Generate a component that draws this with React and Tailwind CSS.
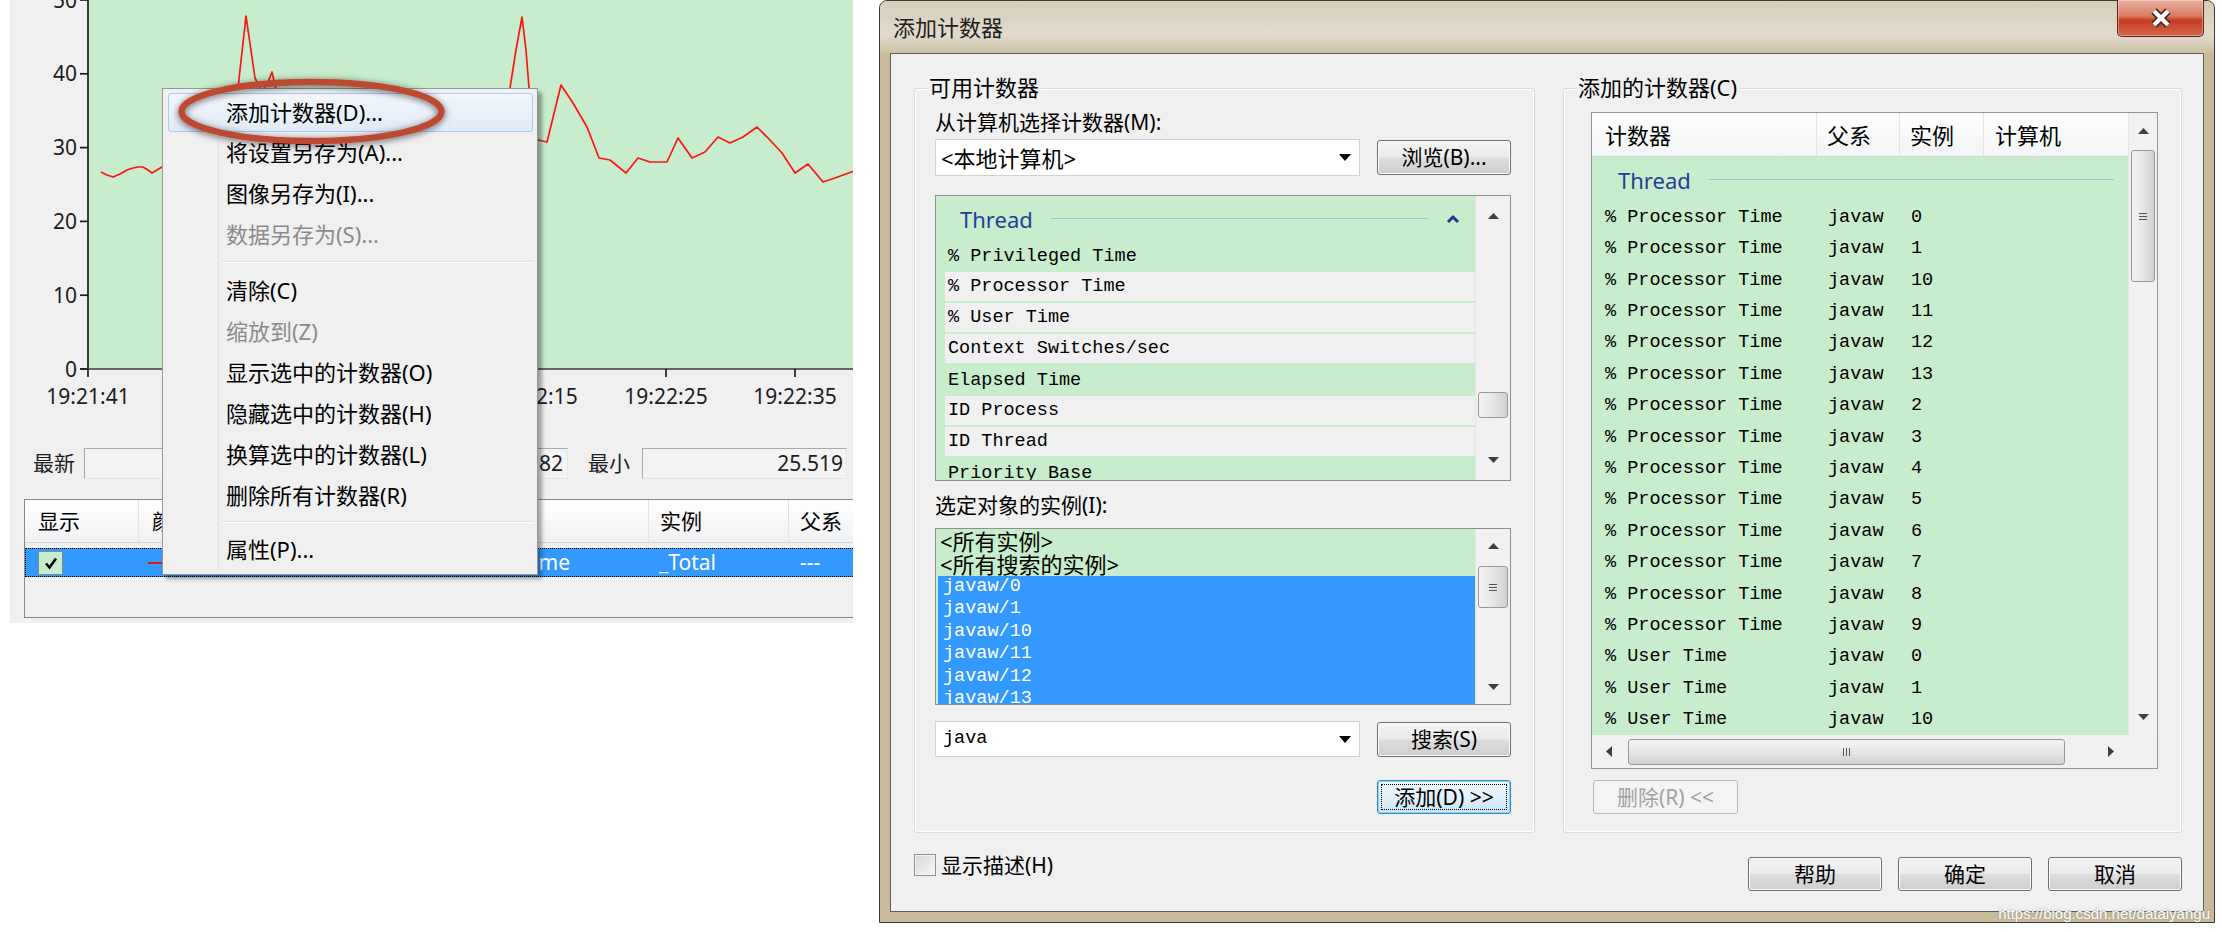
import React from 'react'

const LINE = [
  [101, 172], [107, 175], [113, 177], [120, 174], [127, 170], [133, 168], [138, 167], [143, 167],
  [148, 170], [152, 173], [157, 170], [162, 167], [175, 165], [190, 160], [205, 158], [220, 150],
  [232, 120], [238, 88], [246, 16], [255, 78], [262, 92], [268, 82], [272, 72], [276, 90],
  [285, 120], [300, 150], [320, 160], [340, 155], [360, 165], [380, 158], [400, 162], [420, 150],
  [440, 160], [460, 155], [480, 150], [500, 145], [506, 120], [510, 88], [516, 50], [522, 17],
  [526, 50], [529, 88], [533, 130], [538, 140], [547, 142], [561, 85], [573, 103], [587, 127],
  [599, 158], [610, 160], [626, 173], [638, 158], [650, 162], [667, 162], [678, 138], [692, 158],
  [705, 152], [718, 137], [730, 143], [743, 137], [757, 127], [770, 140], [782, 153], [795, 173],
  [808, 164], [823, 182], [835, 178], [854, 171],
]
  .map((p) => p.join(','))
  .join(' ')

const TIMES = [
  ['19:21:41', 88],
  ['19:22:15', 536],
  ['19:22:25', 666],
  ['19:22:35', 795],
]

const COUNTERS = [
  ['% Privileged Time', true],
  ['% Processor Time', false],
  ['% User Time', false],
  ['Context Switches/sec', false],
  ['Elapsed Time', true],
  ['ID Process', false],
  ['ID Thread', false],
  ['Priority Base', true],
]

const ADDED = [
  ...['0', '1', '10', '11', '12', '13', '2', '3', '4', '5', '6', '7', '8', '9'].map((n) => ['% Processor Time', n]),
  ...['0', '1', '10'].map((n) => ['% User Time', n]),
]

export default function App() {
  return (
    <div className="flex h-[932px] w-[2222px] items-start gap-[26px] overflow-hidden bg-white pl-[10px] font-['Noto_Sans','Noto_Sans_CJK_SC',sans-serif] text-black">
      <PerfPanel />
      <AddCounterDialog />
    </div>
  )
}

/* ---------- left: perfmon graph with context menu ---------- */

function PerfPanel() {
  return (
    <div className="relative flex h-[623px] w-[843px] shrink-0 flex-col overflow-hidden bg-[#f0f0f0]">
      <Chart />

      <div className="mt-[28px] flex h-[31px] items-center whitespace-nowrap text-[21px] leading-none text-[#1c1c1c]">
        <span className="ml-[23px] w-[51px]">最新</span>
        <div className="flex h-full w-[484px] items-center justify-end border border-b-[#e6e6e6] border-l-[#a9a9a9] border-r-[#e6e6e6] border-t-[#a9a9a9] bg-[#f3f3f3] pr-[4px]">
          82
        </div>
        <span className="ml-[20px] w-[54px]">最小</span>
        <div className="flex h-full w-[205px] items-center justify-end border border-b-[#e6e6e6] border-l-[#a9a9a9] border-r-[#e6e6e6] border-t-[#a9a9a9] bg-[#f3f3f3] pr-[3px]">
          25.519
        </div>
      </div>

      <div className="ml-[14px] mt-[20px] h-[119px] w-[840px] shrink-0 border border-[#828790] bg-[#f0f0f0] text-[21px]">
        <div className="flex h-[43px] items-center border-b border-[#d5d5d5] bg-gradient-to-b from-white to-[#f1f2f4] leading-none">
          <div className="flex h-full w-[114px] items-center border-r border-[#e2e3e5] pl-[13px]">显示</div>
          <div className="flex h-full w-[120px] items-center border-r border-[#e2e3e5] pl-[13px]">颜色</div>
          <div className="flex h-full w-[130px] items-center border-r border-[#e2e3e5] pl-[11px]">比例</div>
          <div className="flex h-full w-[260px] items-center border-r border-[#e2e3e5] pl-[11px]">计数器</div>
          <div className="flex h-full w-[140px] items-center border-r border-[#e2e3e5] pl-[11px]">实例</div>
          <div className="flex h-full flex-1 items-center pl-[11px]">父系</div>
        </div>
        <div className="mt-[5px] flex h-[29px] items-center border border-dotted border-black bg-[#3399ff] leading-none text-white">
          <div className="flex w-[113px] items-center pl-[12px]">
            <div className="flex h-[24px] w-[25px] items-center justify-center border border-[#7f8c83] bg-[#c7edcc]">
              <svg width="16" height="16" viewBox="0 0 16 16">
                <path d="M3 8.5 L6.5 12.5 L13 3.5" fill="none" stroke="#000" strokeWidth="2.6" />
              </svg>
            </div>
          </div>
          <div className="flex w-[120px] items-center pl-[9px]">
            <div className="h-[2px] w-[17px] bg-[#e0141e]" />
          </div>
          <div className="w-[130px]" />
          <div className="flex w-[260px] justify-end pr-[79px]">% Processor Time</div>
          <div className="w-[140px] pl-[10px]">_Total</div>
          <div className="pl-[11px]">---</div>
        </div>
      </div>

      <ContextMenu />

      <svg width="300" height="96" viewBox="0 0 300 96" className="absolute left-[160px] top-[64px]">
        <defs>
          <filter id="ovalShadow" x="-10%" y="-40%" width="120%" height="180%">
            <feDropShadow dx="0" dy="1.5" stdDeviation="3.5" floodColor="#000" floodOpacity="0.6" />
          </filter>
        </defs>
        <ellipse cx="141.5" cy="47.5" rx="130" ry="29.5" fill="none" stroke="#bc4a33" strokeWidth="6.5" filter="url(#ovalShadow)" />
      </svg>
    </div>
  )
}

function Chart() {
  const ticks = [0, 10, 20, 30, 40, 50]
  return (
    <svg width="843" height="420" viewBox="10 0 843 420" className="block shrink-0">
      <rect x="88" y="0" width="766" height="369" fill="#c7edcc" />
      <polyline points={LINE} fill="none" stroke="#ff1414" strokeWidth="1.7" strokeLinejoin="round" />
      <line x1="88" y1="0" x2="88" y2="377" stroke="#1c1c1c" strokeWidth="1.7" />
      <line x1="80" y1="369" x2="854" y2="369" stroke="#3a3a3a" strokeWidth="1.7" />
      {ticks.map((v, i) => {
        const y = 369 - i * 73.8
        return (
          <g key={v}>
            <line x1="80" x2="88" y1={y} y2={y} stroke="#1c1c1c" strokeWidth="1.7" />
            <text x="77" y={y + 7.5} textAnchor="end" fontSize="21" fill="#1c1c1c" fontFamily="Noto Sans">
              {v}
            </text>
          </g>
        )
      })}
      {[277, 407, 536, 666, 795].map((x) => (
        <line key={x} x1={x} x2={x} y1="369" y2="377" stroke="#1c1c1c" strokeWidth="1.7" />
      ))}
      {TIMES.map(([t, x]) => (
        <text key={t} x={x} y="404" textAnchor="middle" fontSize="21" fill="#1c1c1c" fontFamily="Noto Sans">
          {t}
        </text>
      ))}
    </svg>
  )
}

function ContextMenu() {
  return (
    <div className="absolute left-[152px] top-[88px] flex h-[487px] w-[376px] flex-col border border-[#979797] bg-[#f0f0f0] pb-[4px] pl-[5px] pr-[4px] pt-[4px] text-[22px] leading-none shadow-[4px_4px_4px_rgba(0,0,0,0.35)]">
      <div className="flex h-[39px] items-center rounded-[3px] border border-[#a9cdf4] bg-gradient-to-b from-[#f3f7fc] to-[#e0eaf6]">
        <div className="w-[50px]" />
        <span className="pl-[7px]">添加计数器(D)...</span>
      </div>
      <MenuItem>将设置另存为(A)...</MenuItem>
      <MenuItem>图像另存为(I)...</MenuItem>
      <MenuItem disabled>数据另存为(S)...</MenuItem>
      <MenuSeparator h="h-[15px]" />
      <MenuItem>清除(C)</MenuItem>
      <MenuItem disabled>缩放到(Z)</MenuItem>
      <MenuItem>显示选中的计数器(O)</MenuItem>
      <MenuItem>隐藏选中的计数器(H)</MenuItem>
      <MenuItem>换算选中的计数器(L)</MenuItem>
      <MenuItem>删除所有计数器(R)</MenuItem>
      <MenuSeparator h="h-[14px]" />
      <MenuItem>属性(P)...</MenuItem>
      <div className="flex flex-1">
        <div className="w-[51px] border-r border-[#e2e3e3]" />
      </div>
    </div>
  )
}

function MenuItem({ children, disabled }) {
  return (
    <div className="flex h-[41px] items-stretch">
      <div className="w-[51px] border-r border-[#e2e3e3]" />
      <span className={`flex items-center pl-[7px] ${disabled ? 'text-[#8b8b8b]' : 'text-black'}`}>{children}</span>
    </div>
  )
}

function MenuSeparator({ h }) {
  return (
    <div className={`flex ${h}`}>
      <div className="w-[51px] border-r border-[#e2e3e3]" />
      <div className="flex flex-1 flex-col justify-center pl-[2px]">
        <div className="h-[2px] border-t border-[#e0e0e0] bg-white" />
      </div>
    </div>
  )
}

/* ---------- right: the add counters dialog ---------- */

function AddCounterDialog() {
  return (
    <div className="relative flex h-[923px] w-[1336px] shrink-0 flex-col rounded-t-[8px] border border-[#3b3a36] bg-[#c8bb9c] px-[10px] pb-[10px]">
      <div className="-mx-[10px] flex h-[52px] shrink-0 items-start justify-between rounded-t-[7px] bg-[linear-gradient(to_bottom,#d6cdb9,#e2dbcc_65%,#cdc1a5)] pl-[13px] pr-[10px]">
        <span className="mt-[13px] text-[22px] leading-[26px] text-[#202020]">添加计数器</span>
        <div className="-mt-[1px] flex h-[37px] w-[87px] items-center justify-center rounded-b-[5px] border border-t-0 border-[#5e2419] bg-[linear-gradient(to_bottom,#eaafa1_0%,#d97a63_45%,#c63b20_56%,#d3684e_100%)] shadow-[inset_0_0_0_1px_rgba(255,255,255,0.35)]">
          <svg width="26" height="22" viewBox="0 0 26 22">
            <path d="M6 4 L20 18 M20 4 L6 18" stroke="#4a2a22" strokeWidth="7.5" />
            <path d="M6 4 L20 18 M20 4 L6 18" stroke="#ffffff" strokeWidth="4.2" />
          </svg>
        </div>
      </div>

      <div className="flex flex-1 flex-col border border-[#625e52] bg-[#f0f0f0] pl-[23px] pr-[21px] pt-[34px] text-[21px]">
        <div className="flex gap-[28px]">
          <LeftGroup />
          <RightGroup />
        </div>

        <div className="mt-[20px] flex items-start">
          <div className="flex h-[24px] items-center gap-[5px]">
            <div className="h-[22px] w-[22px] border border-[#8e8f8f] bg-gradient-to-br from-[#d6d6d6] to-[#f8f8f8] shadow-[inset_0_0_0_1px_#f4f4f4]" />
            <span className="leading-none">显示描述(H)</span>
          </div>
          <div className="ml-auto mt-[4px] flex gap-[16px]">
            <Btn className="h-[34px] w-[134px]">帮助</Btn>
            <Btn className="h-[34px] w-[134px]">确定</Btn>
            <Btn className="h-[34px] w-[134px]">取消</Btn>
          </div>
        </div>
      </div>

      <span className="absolute bottom-[1px] right-[4px] font-['Liberation_Sans',sans-serif] text-[15px] leading-none text-white [text-shadow:0_0_2px_#8a8a8a]">
        https://blog.csdn.net/dataiyangu
      </span>
    </div>
  )
}

function GroupLabel({ children }) {
  return (
    <span className="absolute -top-[15px] left-[12px] bg-[#f0f0f0] px-[2px] text-[22px] leading-[26px]">{children}</span>
  )
}

function LeftGroup() {
  return (
    <div className="relative flex h-[745px] w-[621px] shrink-0 flex-col rounded-[3px] border border-[#d5dfe5] pl-[20px] pr-[23px] shadow-[inset_0_0_0_1px_#ffffff]">
      <GroupLabel>可用计数器</GroupLabel>

      <div className="mt-[20px] h-[26px] leading-[26px]">从计算机选择计数器(M):</div>
      <div className="mt-[4px] flex items-start">
        <Combo className="h-[37px] w-[425px] pl-[5px] text-[22px]">&lt;本地计算机&gt;</Combo>
        <Btn className="ml-auto mt-[1px] h-[35px] w-[134px]">浏览(B)...</Btn>
      </div>

      <div className="mt-[19px] flex h-[286px] border border-[#8e8f8f] bg-[#c7edcc]">
        <div className="flex flex-1 flex-col overflow-hidden">
          <div className="flex h-[45px] shrink-0 items-center pl-[24px]">
            <span className="text-[22px] leading-none text-[#1f3f9a]">Thread</span>
            <div className="ml-[18px] h-[1px] flex-1 bg-[#9fc2d6]" />
            <svg width="14" height="10" viewBox="0 0 14 10" className="ml-[18px] mr-[15px]">
              <path d="M2 8 L7 3 L12 8" fill="none" stroke="#1d3c8f" strokeWidth="3" />
            </svg>
          </div>
          {COUNTERS.map(([name, green]) => (
            <div
              key={name}
              className={`ml-[9px] flex h-[31px] shrink-0 items-center pl-[3px] font-['Liberation_Mono',monospace] text-[18.5px] ${
                green ? 'bg-[#c7edcc]' : 'border-b-2 border-[#c7edcc] bg-[#f0f0f0]'
              }`}
            >
              {name}
            </div>
          ))}
        </div>
        <VScroll className="w-[35px]" box="h-[40px]" thumb="mt-[156px] h-[26px]" />
      </div>

      <div className="mt-[11px] h-[26px] leading-[26px]">选定对象的实例(I):</div>

      <div className="mt-[10px] flex h-[177px] border border-[#8e8f8f] bg-[#c7edcc]">
        <div className="flex flex-1 flex-col overflow-hidden pl-[2px] pt-[1px]">
          <div className="shrink-0 pl-[2px] text-[22px] leading-[23px]">&lt;所有实例&gt;</div>
          <div className="shrink-0 pl-[2px] text-[22px] leading-[23px]">&lt;所有搜索的实例&gt;</div>
          <div className="flex-1 bg-[#3399ff] pl-[5px] font-['Liberation_Mono',monospace] text-[18.5px] leading-[22.4px] text-white">
            {['0', '1', '10', '11', '12', '13'].map((n) => (
              <div key={n}>javaw/{n}</div>
            ))}
          </div>
        </div>
        <VScroll className="w-[35px]" box="h-[34px]" thumb="mt-[3px] h-[42px]" grip />
      </div>

      <div className="mt-[16px] flex items-start">
        <Combo className="h-[36px] w-[425px] pl-[7px] font-['Liberation_Mono',monospace] text-[18.5px]">java</Combo>
        <Btn className="ml-auto mt-[1px] h-[35px] w-[134px]">搜索(S)</Btn>
      </div>

      <div className="mt-[23px] flex justify-end">
        <div className="flex h-[34px] w-[134px] items-center justify-center rounded-[3px] border border-[#2f8ed1] bg-[linear-gradient(to_bottom,#f2f9fd,#e3f1fb_50%,#c9e4f6)] p-[3px] shadow-[inset_0_0_0_1px_#8fd0f5]">
          <div className="flex h-full w-full items-center justify-center border border-dotted border-black text-[21px] leading-none">
            添加(D)&nbsp;&gt;&gt;
          </div>
        </div>
      </div>
    </div>
  )
}

function RightGroup() {
  return (
    <div className="relative flex h-[745px] w-[619px] shrink-0 flex-col rounded-[3px] border border-[#d5dfe5] pl-[27px] shadow-[inset_0_0_0_1px_#ffffff]">
      <GroupLabel>添加的计数器(C)</GroupLabel>

      <div className="mt-[23px] flex h-[657px] w-[567px] flex-col border border-[#8d9a90] bg-[#f0f0f0]">
        <div className="flex h-[622px]">
          <div className="flex w-[536px] flex-col overflow-hidden">
            <div className="flex h-[44px] shrink-0 border-b border-[#d5d5d5] bg-gradient-to-b from-white to-[#f3f4f6] text-[22px] leading-none">
              <div className="flex w-[225px] items-center border-r border-[#e3e4e6] pl-[13px]">计数器</div>
              <div className="flex w-[83px] items-center border-r border-[#e3e4e6] pl-[10px]">父系</div>
              <div className="flex w-[84px] items-center border-r border-[#e3e4e6] pl-[10px]">实例</div>
              <div className="flex items-center pl-[11px]">计算机</div>
            </div>
            <div className="flex flex-1 flex-col overflow-hidden bg-[#c7edcc]">
              <div className="flex h-[45px] shrink-0 items-center whitespace-nowrap pl-[26px]">
                <span className="text-[22px] leading-none text-[#1f3f9a]">Thread</span>
                <div className="ml-[18px] h-[1px] w-[405px] shrink-0 bg-[#9fc2d6]" />
                <svg width="14" height="10" viewBox="0 0 14 10" className="ml-[16px] shrink-0">
                  <path d="M2 8 L7 3 L12 8" fill="none" stroke="#1d3c8f" strokeWidth="3" />
                </svg>
              </div>
              {ADDED.map(([c, n], i) => (
                <div key={i} className="flex h-[31.4px] shrink-0 items-center whitespace-pre font-['Liberation_Mono',monospace] text-[18.5px]">
                  <span className="w-[225px] pl-[13px]">{c}</span>
                  <span className="w-[83px] pl-[11px]">javaw</span>
                  <span className="pl-[11px]">{n}</span>
                </div>
              ))}
            </div>
          </div>
          <VScroll className="w-[29px]" box="h-[36px]" thumb="mt-[1px] h-[132px]" grip />
        </div>
        <div className="flex flex-1">
          <div className="flex w-[536px] items-center bg-[#f1f1f1]">
            <div className="flex h-full w-[34px] items-center justify-center">
              <Arrow dir="left" />
            </div>
            <div className="ml-[2px] flex h-[26px] w-[437px] items-center justify-center rounded-[3px] border border-[#989898] bg-gradient-to-b from-[#f4f4f4] via-[#e6e6e6] to-[#d0d0d0]">
              <div className="flex gap-[2px]">
                <div className="h-[8px] w-[1px] bg-[#555]" />
                <div className="h-[8px] w-[1px] bg-[#555]" />
                <div className="h-[8px] w-[1px] bg-[#555]" />
              </div>
            </div>
            <div className="ml-auto flex h-full w-[34px] items-center justify-center">
              <Arrow dir="right" />
            </div>
          </div>
          <div className="flex-1 bg-[#f0f0f0]" />
        </div>
      </div>

      <div className="ml-[2px] mt-[11px] flex h-[34px] w-[145px] items-center justify-center rounded-[3px] border border-[#b5b9bc] bg-[#f4f4f4] text-[21px] leading-none text-[#a3a3a3]">
        删除(R)&nbsp;&lt;&lt;
      </div>
    </div>
  )
}

/* ---------- small win7 widgets ---------- */

function Btn({ children, className = '' }) {
  return (
    <div
      className={`flex shrink-0 items-center justify-center rounded-[3px] border border-[#707070] bg-[linear-gradient(to_bottom,#f4f4f4,#ebebeb_48%,#dddddd_52%,#cfcfcf)] text-[21px] leading-none shadow-[inset_0_0_0_1px_#fbfbfb] ${className}`}
    >
      {children}
    </div>
  )
}

function Combo({ children, className = '' }) {
  return (
    <div className={`flex shrink-0 items-center justify-between border border-[#cfd3d8] bg-white pr-[8px] leading-none ${className}`}>
      <span>{children}</span>
      <svg width="12" height="7" viewBox="0 0 12 7">
        <path d="M0 0 L12 0 L6 7 Z" fill="#000" />
      </svg>
    </div>
  )
}

function Arrow({ dir }) {
  if (dir === 'up')
    return (
      <svg width="11" height="6" viewBox="0 0 11 6">
        <path d="M0 6 L5.5 0 L11 6 Z" fill="#3f3f3f" />
      </svg>
    )
  if (dir === 'down')
    return (
      <svg width="11" height="6" viewBox="0 0 11 6">
        <path d="M0 0 L11 0 L5.5 6 Z" fill="#3f3f3f" />
      </svg>
    )
  if (dir === 'left')
    return (
      <svg width="6" height="11" viewBox="0 0 6 11">
        <path d="M6 0 L6 11 L0 5.5 Z" fill="#3f3f3f" />
      </svg>
    )
  return (
    <svg width="6" height="11" viewBox="0 0 6 11">
      <path d="M0 0 L6 5.5 L0 11 Z" fill="#3f3f3f" />
    </svg>
  )
}

function VScroll({ className = '', box, thumb, grip }) {
  return (
    <div className={`flex shrink-0 flex-col border-l border-[#e6e6e6] bg-[#f1f1f1] ${className}`}>
      <div className={`flex shrink-0 items-center justify-center ${box}`}>
        <Arrow dir="up" />
      </div>
      <div className="flex-1 px-[2px]">
        <div
          className={`flex items-center justify-center rounded-[3px] border border-[#989898] bg-gradient-to-r from-[#f4f4f4] via-[#e6e6e6] to-[#d0d0d0] ${thumb}`}
        >
          {grip && (
            <div className="flex flex-col gap-[2px]">
              <div className="h-[1px] w-[8px] bg-[#555]" />
              <div className="h-[1px] w-[8px] bg-[#555]" />
              <div className="h-[1px] w-[8px] bg-[#555]" />
            </div>
          )}
        </div>
      </div>
      <div className={`flex shrink-0 items-center justify-center ${box}`}>
        <Arrow dir="down" />
      </div>
    </div>
  )
}
